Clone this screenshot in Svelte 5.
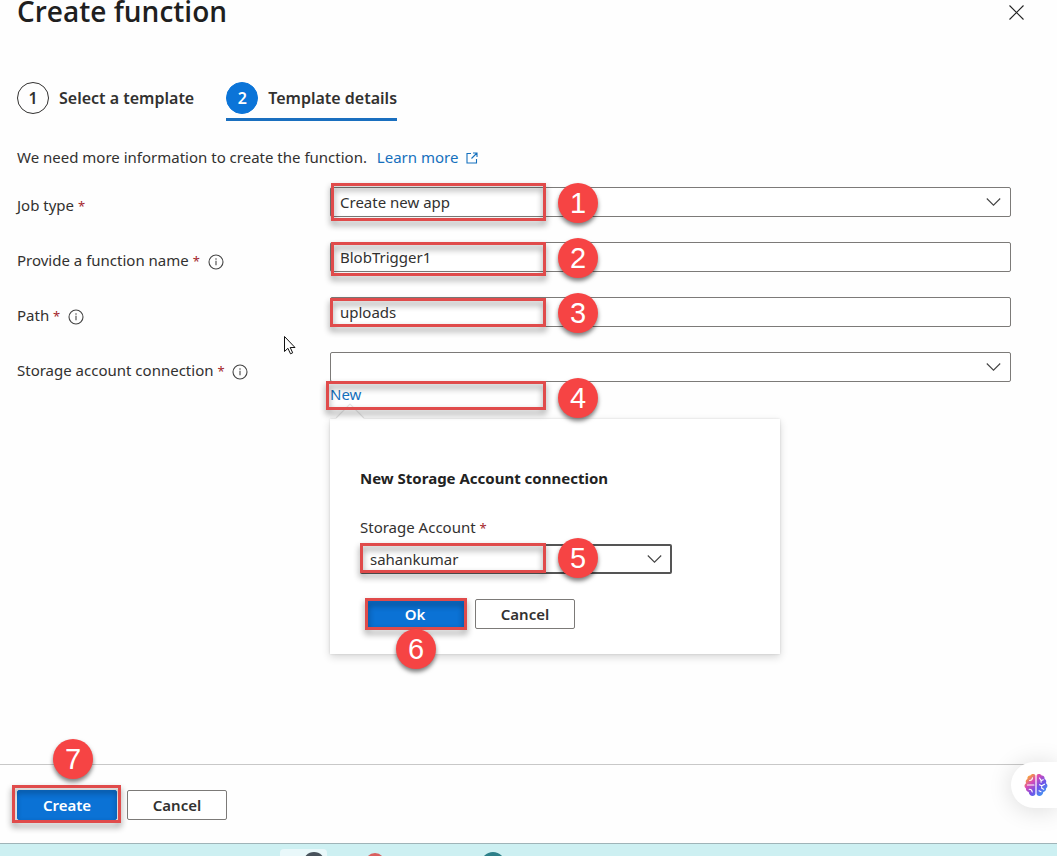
<script>
  let jobType = $state('Create new app');
  let functionName = $state('BlobTrigger1');
  let path = $state('uploads');
  let connection = $state('');
  let account = $state('sahankumar');
</script>

{#snippet chevron()}
  <svg class="chevron" width="16" height="10" viewBox="0 0 16 10" aria-hidden="true">
    <path d="M.8 1.500 7.500 8.200 14.200 1.500" fill="none" stroke="#444" stroke-width="1.1" />
  </svg>
{/snippet}

{#snippet info()}
  <svg class="info" width="16" height="16" viewBox="0 0 16 16" aria-hidden="true">
    <circle cx="8" cy="8" r="7" fill="none" stroke="#444" stroke-width="1.1" />
    <path d="M8 6.8v4.400" stroke="#444" stroke-width="1.1" />
    <circle cx="8" cy="4.900" r=".75" fill="#444" />
  </svg>
{/snippet}

<div class="page">
  <header>
    <h1>Create function</h1>
    <button class="close" aria-label="Close">
      <svg width="16" height="16" viewBox="0 0 16 16" aria-hidden="true">
        <path d="M.5 1.500 14.500 15.500M14.500 1.500 .5 15.500" stroke="#222" stroke-width="1.1" />
      </svg>
    </button>
  </header>

  <main>
    <nav class="steps">
      <button class="step"><span class="num">1</span>Select a template</button>
      <button class="step current" aria-current="step"><span class="num">2</span>Template details</button>
    </nav>

    <p class="intro">
      We need more information to create the function.
      <a href="#learn">Learn more
        <svg width="12" height="12" viewBox="0 0 12 12" aria-hidden="true">
          <path d="M5 1.500H1v9.500h9.500V7M7 1h4v4M11 1 5.500 6.500" fill="none" stroke="currentColor" stroke-width="1.1" />
        </svg>
      </a>
    </p>

    <form class="fields" onsubmit={(e) => e.preventDefault()}>
      <label for="job">Job type <i>*</i></label>
      <div class="control">
        <select id="job" bind:value={jobType}><option>Create new app</option></select>
        {@render chevron()}
        <span class="mark mark-job"></span><span class="badge">1</span>
      </div>

      <label for="name">Provide a function name <i>*</i> {@render info()}</label>
      <div class="control">
        <input id="name" type="text" bind:value={functionName} />
        <span class="mark mark-name"></span><span class="badge">2</span>
      </div>

      <label for="path">Path <i>*</i> {@render info()}</label>
      <div class="control">
        <input id="path" type="text" bind:value={path} />
        <span class="mark mark-path"></span><span class="badge">3</span>
      </div>

      <label for="conn">Storage account connection <i>*</i> {@render info()}</label>
      <div>
        <div class="control">
          <select id="conn" bind:value={connection}><option value=""></option></select>
          {@render chevron()}
        </div>
        <div class="new">
          <a href="#new">New</a>
          <section class="callout">
            <h2>New Storage Account connection</h2>
            <label for="account">Storage Account <i>*</i></label>
            <div class="control active">
              <select id="account" bind:value={account}><option>sahankumar</option></select>
              {@render chevron()}
              <span class="mark mark-account"></span><span class="badge">5</span>
            </div>
            <div class="actions">
              <div class="marked">
                <button class="btn primary" type="button">Ok</button>
                <span class="mark mark-ok"></span><span class="badge">6</span>
              </div>
              <button class="btn" type="button">Cancel</button>
            </div>
          </section>
          <span class="mark mark-new"></span><span class="badge">4</span>
        </div>
      </div>
    </form>

    <svg class="pointer" width="14" height="21" viewBox="0 0 14 21" aria-hidden="true">
      <path d="M1.500 1.500v15l3.400-3.200 2.600 5.500 2.200-1-2.500-5.300h4.800z" fill="#fff" stroke="#111" stroke-width="1" />
    </svg>
  </main>

  <footer>
    <div class="marked">
      <button class="btn primary">Create</button>
      <span class="mark mark-create"></span><span class="badge">7</span>
    </div>
    <button class="btn">Cancel</button>
    <button class="assistant" aria-label="Assistant">
      <svg width="24" height="24" viewBox="0 0 24 24" aria-hidden="true">
        <defs>
          <linearGradient id="brain" x1="0" y1="0" x2="1" y2="1">
            <stop offset="0" stop-color="#f9a03c" />
            <stop offset=".16" stop-color="#f59a45" />
            <stop offset=".34" stop-color="#d94bb5" />
            <stop offset=".6" stop-color="#6f52e8" />
            <stop offset="1" stop-color="#2fb4f5" />
          </linearGradient>
        </defs>
        <path fill="url(#brain)" d="M11.400 2.400C10.600.6 7.300.6 6.400 2.600 4.400 2.500 3 4.300 3.400 6.100 1.700 6.900 1.300 8.800 2.100 10.200 0 11.400.1 14.200 1.900 15.300 1.700 17.300 3 18.800 4.700 19 5 21.600 6.900 23 8.700 22.900 10.300 22.900 11.400 21.900 11.400 20.500zM12.600 2.400C13.400.6 16.700.6 17.600 2.600 19.600 2.500 21 4.300 20.600 6.100 22.300 6.900 22.700 8.800 21.900 10.200 24 11.400 23.900 14.200 22.100 15.300 22.300 17.300 21 18.800 19.300 19 19 21.600 17.100 23 15.300 22.900 13.700 22.900 12.600 21.900 12.600 20.500z" />
        <path fill="none" stroke="#fff" stroke-width="1.1" stroke-linecap="round" d="M8.500 4.800C8.300 6.700 7.300 7.500 5.600 7.500M3.500 12H10M5.200 16.300c2 0 2.800.8 3 2.700M15.500 5l1.600 2.500 2.200-.8M17.100 7.500v1.700M20.500 11.200l-2.800 1.600-2.200-1M17.700 12.800v2.400l2 1M15 17.800l2 1" />
      </svg>
    </button>
  </footer>

  <div class="taskbar" aria-hidden="true">
    <span class="tile"><span class="dot dark"></span></span>
    <span class="dot red"></span>
    <span class="dot teal"></span>
  </div>
</div>

<style>
  :global(body) { margin: 0; background: #fefefe; }
  .page {
    min-height: 100vh;
    display: flex;
    flex-direction: column;
    position: relative;
    overflow: hidden;
    font: 15px/20px 'Segoe UI', 'Noto Sans', sans-serif;
    color: #323130;
  }
  button, input, select { font: inherit; color: inherit; box-sizing: border-box; margin: 0; }
  button { cursor: pointer; }
  a { color: #1570bd; text-decoration: none; }
  i { color: #a4262c; font-style: normal; font-size: 13px; line-height: 1; }

  header {
    display: flex;
    justify-content: space-between;
    align-items: center;
    padding: 0 32px 0 17px;
    height: 24px;
  }
  h1 {
    margin: 0;
    font: 600 28px/24px 'Segoe UI', 'Open Sans', sans-serif;
    padding-bottom: 2px;
    color: #1f1f1f;
  }
  .close { border: 0; background: none; padding: 0; display: flex; }

  main { flex: 1; position: relative; padding: 58px 46px 24px 17px; }
  .steps { display: flex; gap: 32px; }
  .step {
    display: flex;
    align-items: center;
    gap: 10px;
    padding: 0 0 4px;
    border: 0;
    border-bottom: 3px solid transparent;
    background: none;
    font-size: 16px;
    font-weight: 600;
  }
  .num {
    box-sizing: border-box;
    width: 32px;
    height: 32px;
    border: 1px solid #323130;
    border-radius: 50%;
    display: grid;
    place-items: center;
  }
  .current { border-color: #1a6fbf; }
  .current .num { background: #0b74d8; border-color: #0b74d8; color: #fff; }

  .intro { margin: 26px 0 20px; }
  .intro a { margin-left: 6px; }
  .intro svg { margin-left: 4px; vertical-align: -1px; }

  .fields { display: grid; grid-template-columns: 313px minmax(0, 1fr); row-gap: 25px; }
  .fields > label { padding-top: 8px; height: 22px; white-space: nowrap; }
  .info { vertical-align: -4px; margin-left: 4px; }

  .control { position: relative; height: 30px; }
  .control input, .control select {
    display: block;
    width: 100%;
    height: 30px;
    padding: 0 9px;
    border: 1px solid #7c7a78;
    border-radius: 2px;
    background: #fff;
    appearance: none;
    outline: 0;
  }
  .control.active select { border: 2px solid #555; padding: 0 8px; }
  .chevron { position: absolute; right: 9px; top: 10px; pointer-events: none; }

  .new { position: relative; height: 26px; line-height: 24px; }
  .callout {
    position: absolute;
    left: 0;
    top: 37px;
    box-sizing: border-box;
    width: 450px;
    padding: 49px 30px 25px;
    line-height: 20px;
    background: #fff;
    box-shadow: 0 3px 8px rgba(0, 0, 0, .16), 0 0 2px rgba(0, 0, 0, .12);
  }
  .callout::before {
    content: '';
    position: absolute;
    left: 10px;
    top: -10px;
    width: 20px;
    height: 20px;
    transform: rotate(45deg);
    background: #fff;
    box-shadow: -1px -1px 1px rgba(0, 0, 0, .12);
    clip-path: polygon(-20% -20%, 120% -20%, -20% 120%);
  }
  h2 { margin: 0 0 29px; font-size: 15px; line-height: 20px; font-weight: 700; color: #222; }
  .callout label { display: block; height: 20px; margin-bottom: 7px; }
  .callout .control { width: 312px; }
  .actions { display: flex; gap: 10px; margin: 25px 0 0 5px; }

  .btn {
    display: block;
    width: 100px;
    height: 30px;
    padding: 0;
    border: 1px solid #7c7a78;
    border-radius: 2px;
    background: #fff;
    font-weight: 600;
  }
  .primary { background: #0b72d5; border-color: #0b72d5; color: #fff; }
  .marked { position: relative; }

  .mark {
    position: absolute;
    border: 3px solid #e04b4b;
    filter: drop-shadow(0 4px 3px rgba(0, 0, 0, .45));
    pointer-events: none;
  }
  .mark-job { inset: -4px auto -4px 1px; width: 209px; }
  .mark-name { inset: 0 auto -4px 1px; width: 209px; }
  .mark-path { inset: 1px auto 0 0; width: 210px; }
  .mark-new { inset: -1px auto -2px -4px; width: 214px; }
  .mark-account { inset: -1px auto 1px 0; width: 180px; }
  .mark-ok { inset: -1px -2px -1px 0; }
  .mark-create { inset: -5px -4px -3px -5px; }

  .badge {
    position: absolute;
    left: 228px;
    top: -4px;
    width: 40px;
    height: 40px;
    border-radius: 50%;
    background: #f64444;
    box-shadow: 0 3px 4px rgba(0, 0, 0, .5);
    color: #fff;
    font: 29px/40px 'Liberation Sans', Arial, sans-serif;
    text-align: center;
    pointer-events: none;
  }
  .callout .control .badge { left: 198px; top: -6px; }
  .marked .badge { left: 31px; top: 30px; }
  footer .marked .badge { left: 36px; top: -51px; }

  footer {
    position: relative;
    display: flex;
    gap: 10px;
    padding: 25px 17px 23px;
    border-top: 1px solid #c8c8c8;
  }
  .assistant {
    position: absolute;
    right: 0;
    top: -3px;
    width: 46px;
    height: 46px;
    padding: 0 0 0 13px;
    border: 0;
    border-radius: 23px 0 0 23px;
    background: #fff;
    box-shadow: 0 2px 24px rgba(0, 0, 0, .14);
    display: flex;
    align-items: center;
  }

  .taskbar {
    display: flex;
    height: 12px;
    padding-left: 280px;
    border-top: 1px solid #9fb4b8;
    background: #cdf0f2;
    overflow: hidden;
  }
  .tile { width: 47px; height: 40px; margin-top: 5px; border-radius: 4px; background: #e9f8fa; }
  .dot { flex: none; display: block; border-radius: 50%; }
  .dark { width: 22px; height: 22px; margin: 3px 0 0 23px; background: #47525b; }
  .red { width: 20px; height: 20px; margin: 9px 0 0 38px; background: #d95f5f; }
  .teal { width: 24px; height: 24px; margin: 8px 0 0 96px; background: #2c7f89; }

  .pointer { position: absolute; left: 283px; top: 311px; }
</style>
